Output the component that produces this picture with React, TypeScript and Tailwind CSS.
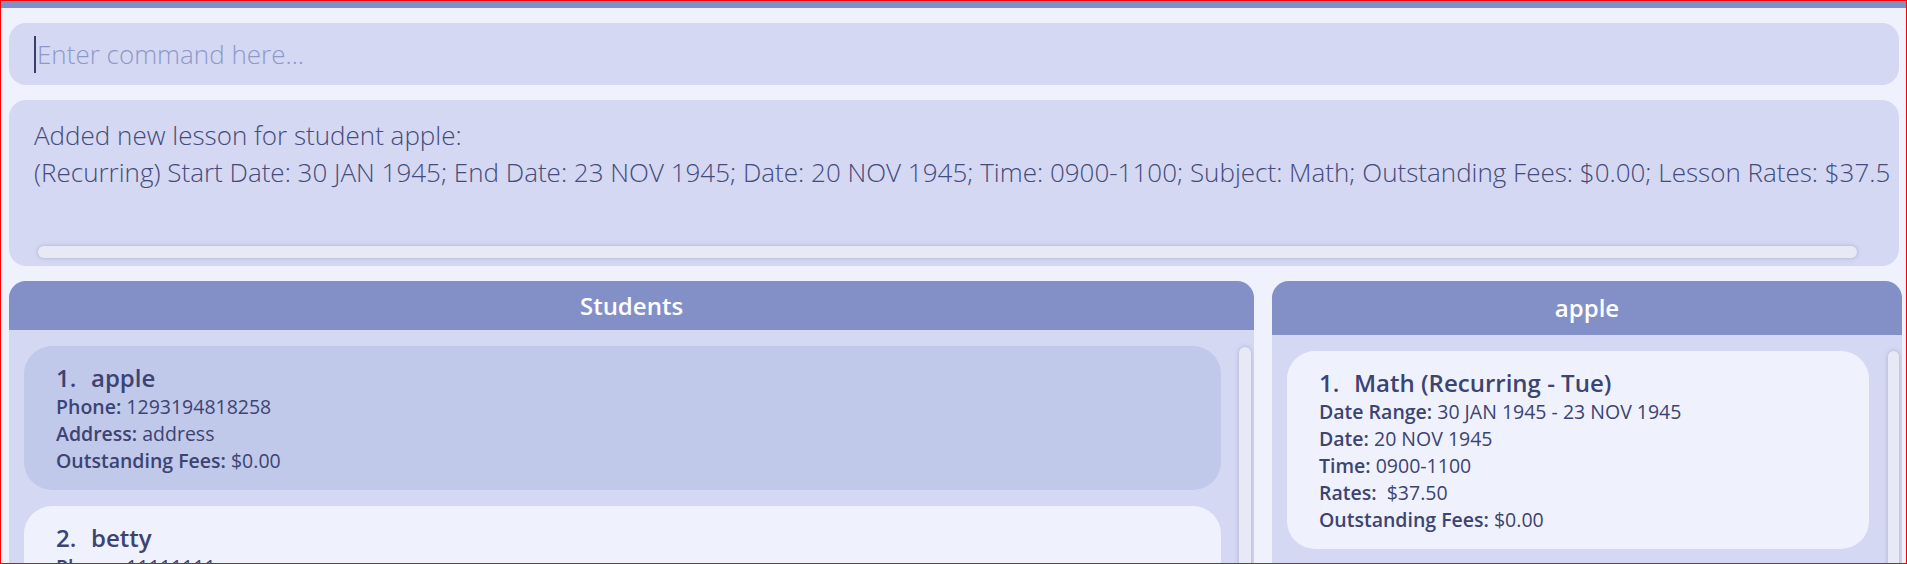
import React from "react";

const FONT = { fontFamily: '"Open Sans", "Noto Sans", sans-serif' };

function Field({ label, value }: { label: string; value: string }) {
  return (
    <div className="leading-[27px] text-[19.5px] whitespace-pre">
      <span className="font-semibold">{label}</span> <span>{value}</span>
    </div>
  );
}

function Title({ n, text }: { n: number; text: string }) {
  return (
    <div className="leading-[31px] text-[24px] font-semibold whitespace-nowrap flex">
      <span className="w-[35px]">{n}.</span>
      <span>{text}</span>
    </div>
  );
}

function VScroll() {
  return (
    <div className="w-[12px] h-[400px] rounded-full bg-[#E7EAF4] shadow-[0_0_4px_rgba(90,100,150,0.35)]" />
  );
}

export default function App() {
  return (
    <div
      style={FONT}
      className="w-[1907px] h-[564px] border border-[#ff0000] bg-[#EFF2FC] overflow-hidden flex flex-col text-[#3D4372]"
    >
      <div className="h-[7px] bg-[#8390C8] shrink-0" />
      <div className="pl-[8px] pr-[7px] pt-[15px] shrink-0">
        <div className="h-[62px] rounded-[17px] bg-[#D4D8F2] flex items-center pl-[25px]">
          <div className="w-[2px] h-[37px] bg-[#3A3F6A]" />
          <span className="ml-[1px] text-[26px] font-light text-[#8E98C9] whitespace-nowrap">
            Enter command here...
          </span>
        </div>
        <div className="mt-[15px] h-[166px] rounded-[17px] bg-[#D4D8F2] flex flex-col">
          <div className="pl-[25px] pt-[17px] text-[26px] font-light leading-[37px] whitespace-nowrap text-[#454B7A]">
            <div>Added new lesson for student apple:</div>
            <div>
              (Recurring) Start Date: 30 JAN 1945; End Date: 23 NOV 1945; Date: 20 NOV 1945; Time: 0900-1100; Subject: Math; Outstanding Fees: $0.00; Lesson Rates: $37.5
            </div>
          </div>
          <div className="mt-auto mb-[8px] ml-[29px] mr-[42px] h-[12px] rounded-full bg-[#E7EAF4] shadow-[0_0_4px_rgba(90,100,150,0.35)]" />
        </div>
      </div>
      <div className="flex pl-[8px] pr-[4px] pt-[15px] gap-[18px] flex-1 min-h-0">
        <div className="w-[1245px] shrink-0 rounded-t-[17px] bg-[#D4D8F2] flex flex-col overflow-hidden">
          <div className="h-[49px] bg-[#8390C8] flex items-center justify-center text-white text-[24px] font-semibold shrink-0">
            Students
          </div>
          <div className="flex flex-1 min-h-0">
            <div className="flex-1 pl-[15px] pt-[16px] flex flex-col gap-[16px]">
              <div className="rounded-[28px] bg-[#C0C9EA] pl-[32px] pt-[16px] pb-[16px]">
                <Title n={1} text="apple" />
                <Field label="Phone:" value="1293194818258" />
                <Field label="Address:" value="address" />
                <Field label="Outstanding Fees:" value="$0.00" />
              </div>
              <div className="rounded-[28px] bg-[#EFF2FC] pl-[32px] pt-[16px] pb-[16px]">
                <Title n={2} text="betty" />
                <Field label="Phone:" value="11111111" />
                <Field label="Address:" value="address" />
                <Field label="Outstanding Fees:" value="$0.00" />
              </div>
            </div>
            <div className="ml-[18px] mr-[3px] pt-[17px]">
              <VScroll />
            </div>
          </div>
        </div>
        <div className="flex-1 rounded-t-[17px] bg-[#D4D8F2] flex flex-col overflow-hidden">
          <div className="h-[54px] bg-[#8390C8] flex items-center justify-center text-white text-[24px] font-semibold shrink-0">
            apple
          </div>
          <div className="flex flex-1 min-h-0">
            <div className="flex-1 pl-[15px] pt-[16px] flex flex-col">
              <div className="rounded-[28px] bg-[#EFF2FC] pl-[32px] pt-[16px] pb-[16px]">
                <Title n={1} text="Math (Recurring - Tue)" />
                <Field label="Date Range:" value="30 JAN 1945 - 23 NOV 1945" />
                <Field label="Date:" value="20 NOV 1945" />
                <Field label="Time:" value="0900-1100" />
                <Field label="Rates:" value={"\u00a0$37.50"} />
                <Field label="Outstanding Fees:" value="$0.00" />
              </div>
            </div>
            <div className="ml-[19px] mr-[3px] pt-[16px]">
              <div className="w-[11px] h-[400px] rounded-full bg-[#E7EAF4] shadow-[0_0_4px_rgba(90,100,150,0.35)]" />
            </div>
          </div>
        </div>
      </div>
    </div>
  );
}
